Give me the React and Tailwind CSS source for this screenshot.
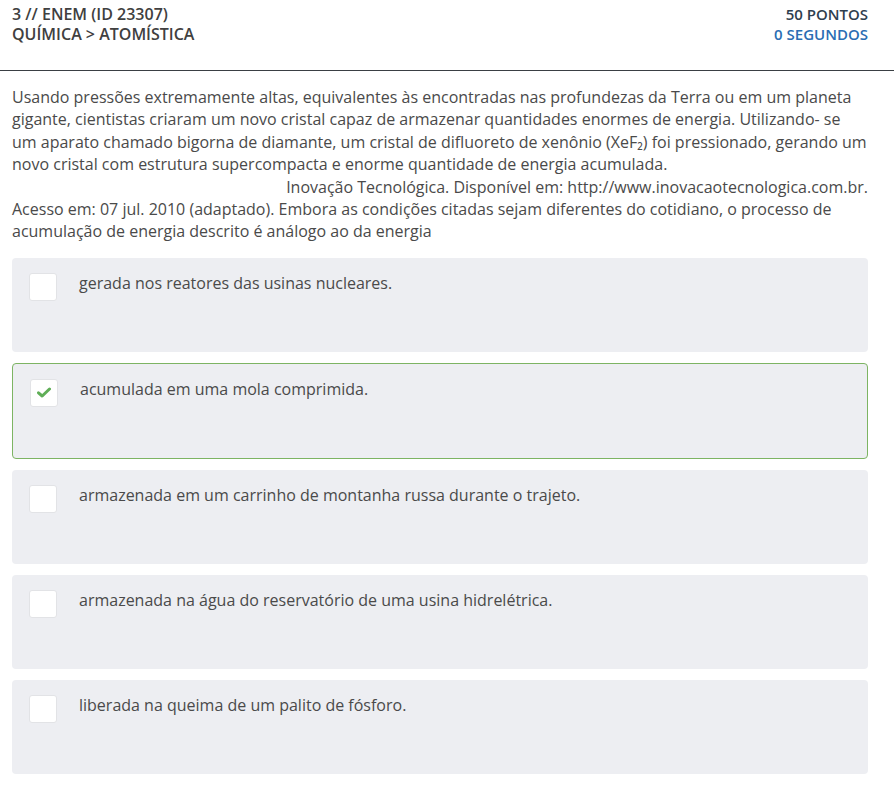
import React, { useState } from 'react';

const OPTIONS = [
    'gerada nos reatores das usinas nucleares.',
    'acumulada em uma mola comprimida.',
    'armazenada em um carrinho de montanha russa durante o trajeto.',
    'armazenada na água do reservatório de uma usina hidrelétrica.',
    'liberada na queima de um palito de fósforo.',
];

function Option({ text, selected, onClick }) {
    return (
        <div
            onClick={onClick}
            className={`flex items-start rounded-[4px] bg-[#edeef2] cursor-pointer ${selected ? 'h-[96px] border border-[#7db463] pt-[15px] pl-[17px] pr-4' : 'h-[94px] pt-[15px] pl-[17px] pr-4'}`}
        >
            <div className="w-[28px] h-[28px] shrink-0 rounded-[3px] bg-white border border-[#e2e3e6] flex items-center justify-center">
                {selected && (
                    <svg width="14" height="11" viewBox="0 0 14 11">
                        <path d="M1.5 5.8 L5.2 9 L12.5 2" fill="none" stroke="#5fae57" strokeWidth="3" strokeLinecap="round" strokeLinejoin="round" />
                    </svg>
                )}
            </div>
            <span className="ml-[22px] mt-[-1px] text-[16px] leading-[22px] text-[#4a4a4a]">{text}</span>
        </div>
    );
}

export default function App() {
    const [selected, setSelected] = useState(1);

    return (
        <div className="min-h-[789px] bg-white font-['Open_Sans',sans-serif]">
            <div className="flex justify-between pl-3 pr-[26px] pt-[4px] pb-[26px] border-b border-[#3a3f44] leading-[20px] font-semibold">
                <div className="text-[16px] text-[#404040]">
                    <div>3 // ENEM (ID 23307)</div>
                    <div>QUÍMICA &gt; ATOMÍSTICA</div>
                </div>
                <div className="text-right text-[15px]">
                    <div className="text-[#2e3e4e]">50 PONTOS</div>
                    <div className="text-[#2a6db3]">0 SEGUNDOS</div>
                </div>
            </div>

            <div className="pl-3 pr-[26px] pt-[15px]">
                <div className="text-[16px] leading-[22.4px] text-[#4a4a4a]">
                    <div>
                        Usando pressões extremamente altas, equivalentes às encontradas nas profundezas da Terra ou em um planeta gigante, cientistas criaram um novo cristal capaz de armazenar quantidades enormes de energia. Utilizando- se um aparato chamado bigorna de diamante, um cristal de difluoreto de xenônio (XeF₂) foi pressionado, gerando um novo cristal com estrutura supercompacta e enorme quantidade de energia acumulada.
                    </div>
                    <div className="text-right">Inovação Tecnológica. Disponível em: http://www.inovacaotecnologica.com.br.</div>
                    <div>
                        Acesso em: 07 jul. 2010 (adaptado). Embora as condições citadas sejam diferentes do cotidiano, o processo de acumulação de energia descrito é análogo ao da energia
                    </div>
                </div>

                <div className="mt-[15px] flex flex-col gap-[11px]">
                    {OPTIONS.map((o, i) => (
                        <Option key={i} text={o} selected={selected === i} onClick={() => setSelected(i)} />
                    ))}
                </div>
            </div>
        </div>
    );
}
